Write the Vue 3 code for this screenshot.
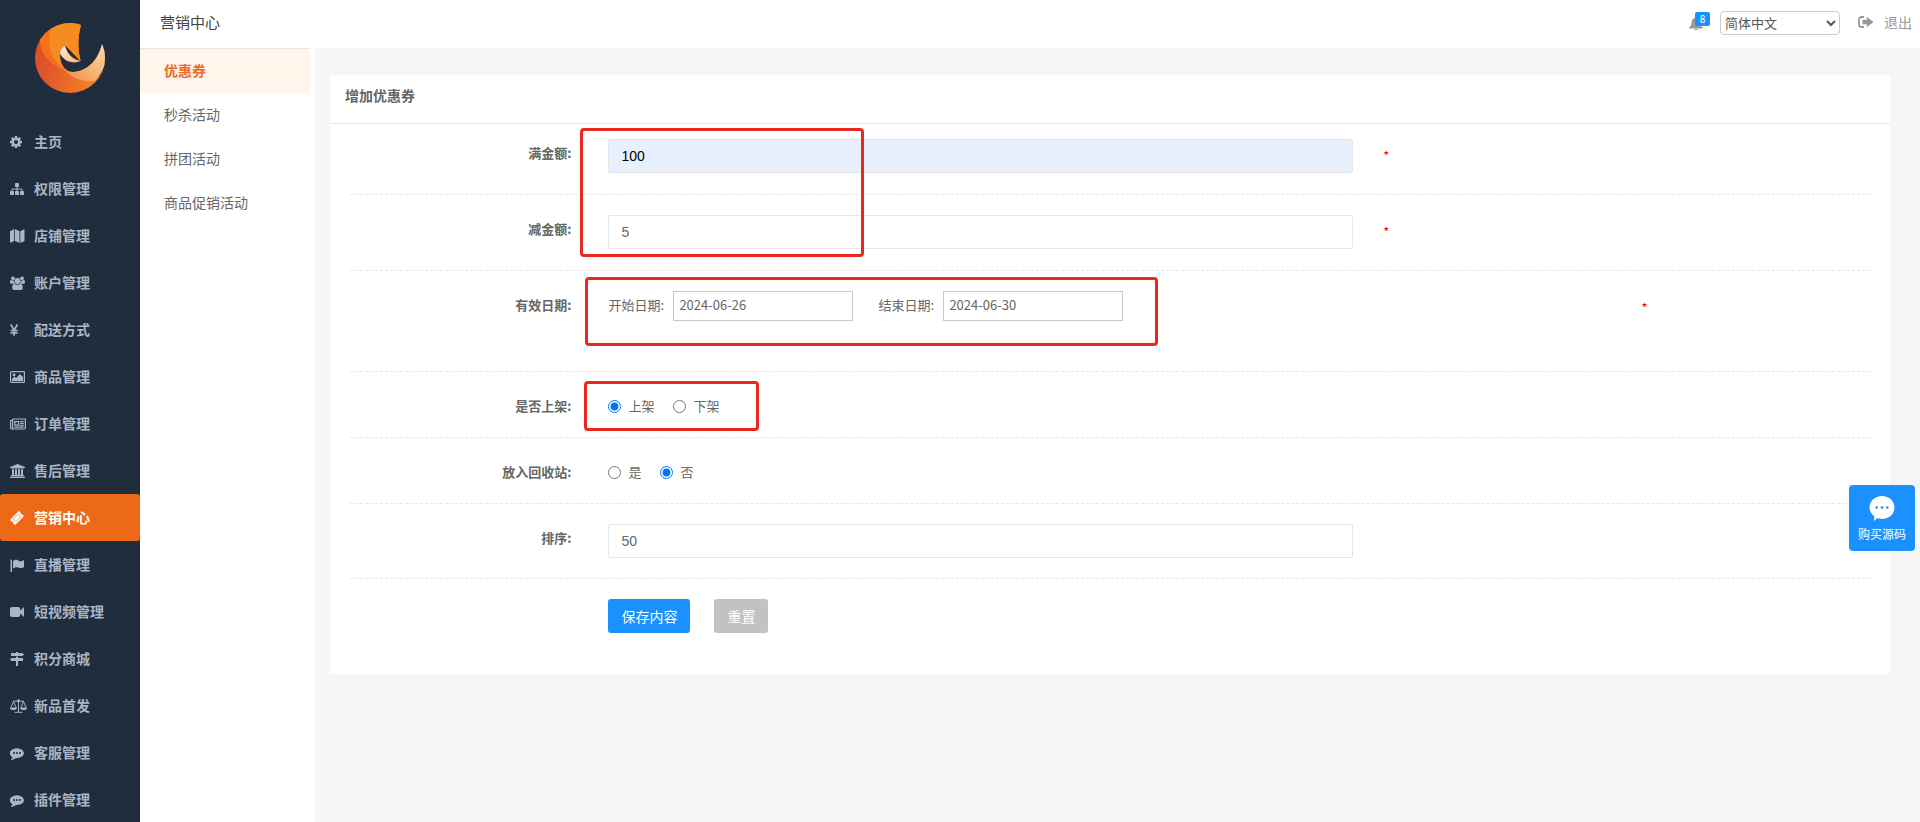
<script setup>
import { ref } from 'vue'

const menu = [
  { icon: 'cog', text: '主页' },
  { icon: 'sitemap', text: '权限管理' },
  { icon: 'map', text: '店铺管理' },
  { icon: 'users', text: '账户管理' },
  { icon: 'yen', text: '配送方式' },
  { icon: 'image', text: '商品管理' },
  { icon: 'news', text: '订单管理' },
  { icon: 'bank', text: '售后管理' },
  { icon: 'ticket', text: '营销中心', active: true },
  { icon: 'flag', text: '直播管理' },
  { icon: 'video', text: '短视频管理' },
  { icon: 'signs', text: '积分商城' },
  { icon: 'scale', text: '新品首发' },
  { icon: 'chat', text: '客服管理' },
  { icon: 'chat', text: '插件管理' }
]
const subMenu = ['优惠券', '秒杀活动', '拼团活动', '商品促销活动']

const full = ref('100')
const minus = ref('5')
const start = ref('2024-06-26')
const end = ref('2024-06-30')
const shelf = ref('up')
const recycle = ref('no')
const sort = ref('50')
const lang = ref('zh')
</script>

<template>
  <svg class="sprite" aria-hidden="true">
    <symbol id="i-cog" viewBox="0 0 17 14"><path transform="translate(-1 0) scale(.0078125)" fill-rule="evenodd" d="M1152 896q0-106-75-181t-181-75-181 75-75 181 75 181 181 75 181-75 75-181zm512-109v222q0 12-8 23t-20 13l-185 28q-19 54-39 91 35 50 107 138 10 12 10 25t-9 23q-27 37-99 108t-94 71q-12 0-26-9l-138-108q-44 23-91 38-16 136-29 186-7 28-36 28h-222q-14 0-24.500-8.500t-11.500-21.500l-28-184q-49-16-90-37l-141 107q-10 9-25 9-14 0-25-11-126-114-165-168-7-10-7-23 0-12 8-23 15-21 51-66.500t54-70.500q-27-50-41-99l-183-27q-13-2-21-12.500t-8-23.500v-222q0-12 8-23t19-13l186-28q14-46 39-92-40-57-107-138-10-12-10-24 0-10 9-23 26-36 98.500-107.500t94.500-71.500q13 0 26 10l138 107q44-23 91-38 16-136 29-186 7-28 36-28h222q14 0 24.500 8.500t11.500 21.500l28 184q49 16 90 37l142-107q9-9 24-9 13 0 25 10 129 119 165 170 7 8 7 22 0 12-8 23-15 21-51 66.500t-54 70.500q26 50 41 98l183 28q13 2 21 12.500t8 23.500z" /></symbol>
    <symbol id="i-sitemap" viewBox="0 0 17 14"><path transform="scale(.0078125)" d="M1792 1248v320q0 40-28 68t-68 28h-320q-40 0-68-28t-28-68v-320q0-40 28-68t68-28h96v-192h-512v192h96q40 0 68 28t28 68v320q0 40-28 68t-68 28h-320q-40 0-68-28t-28-68v-320q0-40 28-68t68-28h96v-192h-512v192h96q40 0 68 28t28 68v320q0 40-28 68t-68 28h-320q-40 0-68-28t-28-68v-320q0-40 28-68t68-28h96v-192q0-52 38-90t90-38h512v-192h-96q-40 0-68-28t-28-68v-320q0-40 28-68t68-28h320q40 0 68 28t28 68v320q0 40-28 68t-68 28h-96v192h512q52 0 90 38t38 90v192h96q40 0 68 28t28 68z" /></symbol>
    <symbol id="i-map" viewBox="0 0 17 14"><path d="M0 2.200 4.200 0v12L0 14zM5 0l4.500 2.200V14L5 12zM10.300 2.200 14.500 0v12l-4.200 2z" /></symbol>
    <symbol id="i-users" viewBox="0 0 17 14"><circle cx="7.500" cy="5" r="2.900" /><circle cx="3" cy="2.300" r="1.900" /><circle cx="12" cy="2.300" r="1.900" /><path d="M0 5.500C0 4.400.8 4 1.500 4c1 .8 2 .8 2.700.5-.2 1.500.2 2.600 1.200 3.300H1.500C.5 7.800 0 7.200 0 5.500zM15 5.500C15 4.400 14.200 4 13.500 4c-1 .8-2 .8-2.700.5.2 1.500-.2 2.600-1.200 3.300h3.900c1 0 1.500-.6 1.500-2.300zM2.200 12c0-3 .9-4.200 2.400-4.200 1.800 1.400 4 1.400 5.800 0 1.500 0 2.400 1.200 2.400 4.200 0 1.200-.8 2-2 2H4.200c-1.200 0-2-.8-2-2z" /></symbol>
    <symbol id="i-yen" viewBox="0 0 17 14"><path fill="none" stroke="currentColor" stroke-width="1.700" d="M.8 1.500 4.100 7.200 7.400 1.500M4.100 7v5.800M.5 7.500h7.200M.5 9.900h7.200" /></symbol>
    <symbol id="i-image" viewBox="0 0 17 14"><rect x=".6" y="1.600" width="13.800" height="10.800" rx=".7" fill="none" stroke="currentColor" stroke-width="1.200" /><circle cx="4" cy="4.800" r="1.500" /><path d="M2 11V9l2.500-2.500L6 8l4-4 3 3v4z" /></symbol>
    <symbol id="i-news" viewBox="0 0 17 14"><path fill="none" stroke="currentColor" stroke-width="1.200" d="M2.600 2h12.800v8.800c0 .8-.4 1.200-1.200 1.200H1.800C1 12 .6 11.600.6 10.800V3.500h2M2.600 2v8.800c0 .8-.3 1.200-.8 1.200M4.800 4.600h3.900v3.600H4.800zM10.200 4.600h3.500M10.200 6.500h3.500M10.200 8.400h3.500M4.300 10.200h9.400" /></symbol>
    <symbol id="i-bank" viewBox="0 0 17 14"><path d="M7.500 0 15 3v1h-1c0 .4-.2.600-.6.600H1.600C1.200 4.600 1 4.400 1 4H0V3zM2 5.200h2V11h1V5.200h2V11h1V5.200h2V11h1V5.200h2V11h.5c.3 0 .5.200.5.500v.5H1v-.5c0-.3.200-.5.500-.5H2zM.6 12.500h13.800c.4 0 .6.200.6.600v.9H0v-.9c0-.4.200-.6.600-.6z" /></symbol>
    <symbol id="i-ticket" viewBox="0 0 17 14"><path fill-rule="evenodd" d="M8.300.5c.4-.4.900-.4 1.300 0l1.100 1.100c-.5 1.200.5 2.300 1.700 1.700l1 1.100c.4.400.4.900 0 1.300l-7.800 7.800c-.4.400-.9.400-1.300 0l-1.100-1.100c.6-1.200-.5-2.300-1.700-1.700L.5 9.600c-.4-.4-.4-.9 0-1.300zM8 2.900 2.900 8l3.100 3.100L11.100 6z" /><path d="M8 3.500 3.500 8 6 10.500 10.500 6z" /></symbol>
    <symbol id="i-flag" viewBox="0 0 17 14"><path d="M1 1.500c.6 0 1 .4 1 1V14H.5V2.500c0-.6 0-1 .5-1zM3 3c3-2 4.500-1.200 6 0 1.500.8 3 .3 5-1v7c-2 1.400-3.600 1.600-5.100.8C7 8.800 5.500 8.900 3 10.500z" /></symbol>
    <symbol id="i-video" viewBox="0 0 17 14"><path d="M2 2h6c1.400 0 2.200.9 2.200 2.200v1.500L14 2v10l-3.800-3.700v1.500C10.200 11.200 9.400 12 8 12H2.200C.8 12 0 11.200 0 9.800V4.200C0 2.900.8 2 2 2z" /></symbol>
    <symbol id="i-signs" viewBox="0 0 17 14"><path d="M6 0h2v1h4.500L14 2.500 12.500 4H1V1h5zM6 4.500h2V6h5v3H8v5H6V9H1.500L0 7.500 1.500 6H6z" /></symbol>
    <symbol id="i-scale" viewBox="0 0 17 14"><path fill="none" stroke="currentColor" stroke-width="1" d="M3 2.200h11M8.500 1v12M4.500 13.300h8M3.500 2.500.7 9h5.600zM13.500 2.500 10.700 9h5.600z" /><circle cx="8.500" cy="1.500" r="1.300" /><path d="M0 9h7c-.3 1.400-1.600 2-3.500 2S.3 10.400 0 9zM10 9h7c-.3 1.400-1.600 2-3.500 2s-3.200-.6-3.500-2z" /></symbol>
    <symbol id="i-chat" viewBox="0 0 17 14"><path transform="scale(.0078125)" fill-rule="evenodd" d="M640 896a128 128 0 1 0-256 0 128 128 0 1 0 256 0zm384 0a128 128 0 1 0-256 0 128 128 0 1 0 256 0zm384 0a128 128 0 1 0-256 0 128 128 0 1 0 256 0zm384 0q0 174-120 321.500t-326 233-450 85.500q-70 0-145-8-198 175-460 242-49 14-114 22-17 2-30.500-9t-17.500-29q-2-18 10-34 40-45 80-90 60-80 100-200-157-89-247.500-220t-90.500-281q0-130 71-248.500t191-204.500 286-136.500 348-50.500q244 0 450 85.500t326 233 120 321.500z" /></symbol>
  </svg>

  <div class="app">
    <aside class="sidebar">
      <div class="logo">
        <svg viewBox="35 23 70 70" width="70" height="70" role="img" aria-label="Logo">
          <defs>
            <linearGradient id="lg-base" x1="0" y1=".3" x2="1" y2=".7">
              <stop offset="0" stop-color="#dc4a29" />
              <stop offset=".3" stop-color="#e2552a" />
              <stop offset="1" stop-color="#f58a24" />
            </linearGradient>
            <linearGradient id="lg-mid" x1="0" y1="0" x2="1" y2="1">
              <stop offset="0" stop-color="#f8741a" />
              <stop offset=".5" stop-color="#f4701c" />
              <stop offset="1" stop-color="#ea6526" />
            </linearGradient>
            <linearGradient id="lg-tail" x1="0" y1="1" x2="1" y2="0">
              <stop offset="0" stop-color="#f0853a" />
              <stop offset=".45" stop-color="#f7b473" />
              <stop offset="1" stop-color="#fbdcb8" />
            </linearGradient>
            <linearGradient id="lg-in" x1="0" y1="0" x2="1" y2="1">
              <stop offset="0" stop-color="#fff0df" />
              <stop offset="1" stop-color="#f6b06b" />
            </linearGradient>
            <clipPath id="disc"><circle cx="70" cy="58" r="35" /></clipPath>
          </defs>
          <g clip-path="url(#disc)">
            <path fill="url(#lg-base)" d="M82 20H30v80h76V50l-4-6c-4 16-14 27-29 28-9 0-13-10-13-19l5-8 15.500 16c-3-13-3-24 .5-36z" />
            <path fill="url(#lg-mid)" d="M82 20H48C37 32 38 47 46 57c5 6 12 12 19 14-4-4-6-12-5-18l5-8 15.500 16c-3-13-3-24 .5-36z" />
            <path fill="#f58b21" d="M82 20H57c-9 8-10 22-6 32 3 8 8 14 14 18-4-4-6-11-5-17l5-8 15.500 16c-3-13-3-24 .5-36z" />
            <path fill="url(#lg-tail)" d="M62 67c3 3 7 5 11 5 15-1 25-12 29-28l8 14-15 23c-14 2-25-4-33-14z" />
          </g>
          <path fill="url(#lg-in)" d="M65 45.500c-3 2-5 5-5 8 4 8 13 11 21 7.500-8-1.500-14-7-16-15.500z" />
        </svg>
      </div>
      <nav>
        <a v-for="m in menu" :key="m.text" href="#" class="menu-item" :class="{ active: m.active }">
          <svg class="menu-icon"><use :href="'#i-' + m.icon" /></svg>
          <span>{{ m.text }}</span>
        </a>
      </nav>
    </aside>

    <div class="page">
      <header class="topbar">
        <h1>营销中心</h1>
        <div class="tools">
          <button type="button" class="bell" aria-label="通知">
            <svg viewBox="0 0 14 13" width="14" height="13"><path fill="#999" d="M7 0c.6 0 1 .4 1 1 2.300.5 3.500 2.200 3.500 4.500 0 2.500.8 4 2.500 5 0 .6-.4 1-1 1H1c-.6 0-1-.4-1-1 1.700-1 2.500-2.500 2.500-5C2.500 3.200 3.700 1.500 6 1c0-.6.4-1 1-1zM5 12h4c0 .6-.8 1-2 1s-2-.4-2-1z" /></svg>
            <span class="badge">8</span>
          </button>
          <select v-model="lang" aria-label="语言">
            <option value="zh">简体中文</option>
          </select>
          <a href="#" class="logout">
            <svg viewBox="0 0 16 14" width="16" height="14"><path fill="none" stroke="#999" stroke-width="1.800" d="M6 2H3.500C2 2 1 2.800 1 4.200v5.600C1 11.200 2 12 3.500 12H6" /><path fill="#999" d="M4.500 4.700h4.300V1.800L15.500 7l-6.700 5.200V9.300H4.500z" /></svg>
            <span>退出</span>
          </a>
        </div>
      </header>

      <div class="body">
        <nav class="subnav">
          <a v-for="(s, i) in subMenu" :key="s" href="#" :class="{ active: i === 0 }">{{ s }}</a>
        </nav>

        <main>
          <section class="card">
            <h2>增加优惠券</h2>
            <form @submit.prevent>
              <div class="row first money">
                <label class="name" for="full">满金额:</label>
                <div class="field">
                  <input id="full" v-model="full" class="text filled" type="text">
                  <i class="mark mark-money"></i>
                </div>
                <span class="star">*</span>
              </div>
              <div class="row money">
                <label class="name" for="minus">减金额:</label>
                <div class="field"><input id="minus" v-model="minus" class="text" type="text"></div>
                <span class="star">*</span>
              </div>
              <div class="row dates">
                <span class="name">有效日期:</span>
                <div class="field inline">
                  <label class="date"><span>开始日期:</span><input v-model="start" type="text"></label>
                  <label class="date"><span>结束日期:</span><input v-model="end" type="text"></label>
                  <i class="mark mark-dates"></i>
                </div>
                <span class="star">*</span>
              </div>
              <div class="row">
                <span class="name">是否上架:</span>
                <div class="field inline radios">
                  <label><input v-model="shelf" type="radio" name="shelf" value="up"><span>上架</span></label>
                  <label><input v-model="shelf" type="radio" name="shelf" value="down"><span>下架</span></label>
                  <i class="mark mark-shelf"></i>
                </div>
              </div>
              <div class="row">
                <span class="name">放入回收站:</span>
                <div class="field inline radios">
                  <label><input v-model="recycle" type="radio" name="recycle" value="yes"><span>是</span></label>
                  <label><input v-model="recycle" type="radio" name="recycle" value="no"><span>否</span></label>
                </div>
              </div>
              <div class="row">
                <label class="name" for="sort">排序:</label>
                <div class="field"><input id="sort" v-model="sort" class="text" type="text"></div>
              </div>
              <div class="row last">
                <span></span>
                <div class="field inline buttons">
                  <button type="submit" class="btn primary">保存内容</button>
                  <button type="reset" class="btn">重置</button>
                </div>
              </div>
            </form>
          </section>
        </main>
      </div>
    </div>

    <a href="#" class="buy">
      <svg viewBox="0 0 26 26" width="26" height="26"><path fill="#fff" d="M13 1c7 0 12.500 5 12.500 11.500S20 24 13 24c-2 0-3.500-.3-4.800-.9L5 26l.2-4.800C2.300 19 .5 16 .5 12.500.5 6 6 1 13 1z" /><g fill="#1a91ff"><circle cx="7.700" cy="12.500" r="1.300" /><circle cx="13" cy="12.500" r="1.300" /><circle cx="18.300" cy="12.500" r="1.300" /></g></svg>
      <span>购买源码</span>
    </a>
  </div>
</template>

<style>
body {
  margin: 0;
}
</style>

<style scoped>
* {
  box-sizing: border-box;
}
.sprite {
  display: none;
}
.app,
.app button,
.app select {
  font-family: "Noto Sans CJK SC", sans-serif;
}
.app {
  display: flex;
  height: 100vh;
  overflow: hidden;
  font-size: 13px;
  line-height: 20px;
  color: #666;
  background: #f5f6f8;
}
a {
  color: inherit;
  text-decoration: none;
}
.sidebar {
  flex: none;
  width: 140px;
  overflow: hidden;
  background: #1f2d3d;
}
.logo {
  display: flex;
  justify-content: center;
  height: 118px;
  padding-top: 23px;
}
.menu-item {
  display: flex;
  align-items: center;
  gap: 7px;
  height: 47px;
  padding-left: 10px;
  border-radius: 3px;
  font-size: 14px;
  font-weight: 700;
  color: #aab5c6;
}
.menu-item span {
  padding-bottom: 2px;
}
.menu-icon {
  width: 17px;
  height: 14px;
  fill: currentColor;
}
.menu-item.active {
  background: #ec6a17;
  color: #fff;
}
.page {
  display: flex;
  flex: 1;
  flex-direction: column;
  min-width: 0;
}
.topbar {
  display: flex;
  align-items: flex-start;
  justify-content: space-between;
  height: 48px;
  padding: 0 8px 0 20px;
  background: #fff;
}
h1 {
  margin: 0;
  font-size: 15px;
  font-weight: 400;
  line-height: 44px;
  color: #444;
}
.tools {
  display: flex;
  align-items: center;
  height: 46px;
}
.bell {
  position: relative;
  display: flex;
  width: 21px;
  margin-right: 10px;
  padding: 0;
  border: 0;
  background: none;
}
.badge {
  position: absolute;
  top: -5px;
  right: 0;
  width: 15px;
  height: 14px;
  border-radius: 2px;
  background: #1a91ff;
  color: #fff;
  font-size: 10px;
  line-height: 14px;
  text-align: center;
}
select {
  width: 120px;
  height: 24px;
  margin-right: 18px;
  padding: 0 0 3px;
  border: 1px solid #ccc;
  border-radius: 4px;
  background: #fff;
  color: #555;
  font-size: 13px;
}
.logout {
  display: flex;
  align-items: center;
  gap: 10px;
  height: 24px;
  padding-bottom: 3px;
  color: #999;
  font-size: 14px;
}
.body {
  display: flex;
  flex: 1;
}
.subnav {
  flex: none;
  width: 175px;
  padding-right: 5px;
  background: #fff;
}
.subnav a {
  display: block;
  height: 44px;
  padding-left: 24px;
  font-size: 14px;
  line-height: 42px;
}
.subnav .active {
  height: 45px;
  border-top: 1px solid #e6e6e6;
  background: #fff5eb;
  color: #ec6a2a;
  font-weight: 700;
}
main {
  flex: 1;
  min-width: 0;
  padding: 27px 30px 0 15px;
}
.card {
  padding-bottom: 41px;
  background: #fff;
}
h2 {
  height: 49px;
  margin: 0;
  padding-left: 15px;
  border-bottom: 1px solid #e6e6e6;
  font-size: 14px;
  font-weight: 700;
  line-height: 40px;
}
form {
  padding: 0 20px;
}
.row {
  display: grid;
  grid-template-columns: 17% 49% 34%;
  align-items: start;
  padding: 20px 0;
  border-bottom: 1px dashed #e6e6e6;
}
.row.money {
  padding-bottom: 21px;
}
.row.first {
  padding-top: 15px;
}
.row.dates {
  grid-template-columns: 17% 66% 17%;
  padding-bottom: 50px;
}
.row.last {
  padding-bottom: 0;
  border: 0;
}
.name {
  padding: 4px 37px 0 0;
  font-weight: 700;
  text-align: right;
}
.field {
  position: relative;
}
.inline {
  display: flex;
  align-items: center;
}
.text {
  display: block;
  width: 100%;
  height: 34px;
  padding: 0 12px;
  border: 1px solid #e6e6e6;
  border-radius: 2px;
  background: #fff;
  color: #666;
  font-family: "Liberation Sans", Arial, sans-serif;
  font-size: 14px;
}
.text.filled {
  background: #e8f0fe;
  color: #000;
}
.date {
  display: flex;
  align-items: center;
  margin-right: 25px;
}
.date span {
  width: 65px;
  padding-bottom: 3px;
}
.date input {
  width: 180px;
  height: 30px;
  padding: 0 5px 3px;
  border: 1px solid #c8c8c8;
  background: #fff;
  color: #666;
  font-family: "Noto Sans CJK SC", sans-serif;
  font-size: 13px;
}
.radios {
  gap: 19px;
}
.radios label {
  display: flex;
  align-items: center;
  gap: 7px;
  padding-top: 4px;
}
.radios span {
  padding-bottom: 1px;
}
.radios input {
  width: 13px;
  height: 13px;
  margin: 0;
}
.star {
  padding: 7px 0 0 30px;
  color: #f00;
}
.buttons {
  gap: 24px;
}
.btn {
  height: 34px;
  padding: 0 13px 1px;
  border: 0;
  border-radius: 3px;
  background: #c2c2c2;
  color: #fff;
  font-size: 14px;
}
.btn.primary {
  background: #1a91ff;
}
.mark {
  position: absolute;
  z-index: 1;
  border: 3px solid #e8281e;
  border-radius: 4px;
  pointer-events: none;
}
.mark-money {
  top: -11px;
  left: -28px;
  width: 284px;
  height: 129px;
}
.mark-dates {
  top: -14px;
  left: -23px;
  width: 573px;
  height: 69px;
}
.mark-shelf {
  top: -11px;
  left: -24px;
  width: 175px;
  height: 50px;
}
.buy {
  position: fixed;
  top: 485px;
  right: 5px;
  z-index: 2;
  display: flex;
  flex-direction: column;
  align-items: center;
  gap: 3px;
  width: 66px;
  height: 66px;
  padding-top: 10px;
  border-radius: 4px;
  background: #1a91ff;
  color: #fff;
  font-size: 12px;
}
</style>
